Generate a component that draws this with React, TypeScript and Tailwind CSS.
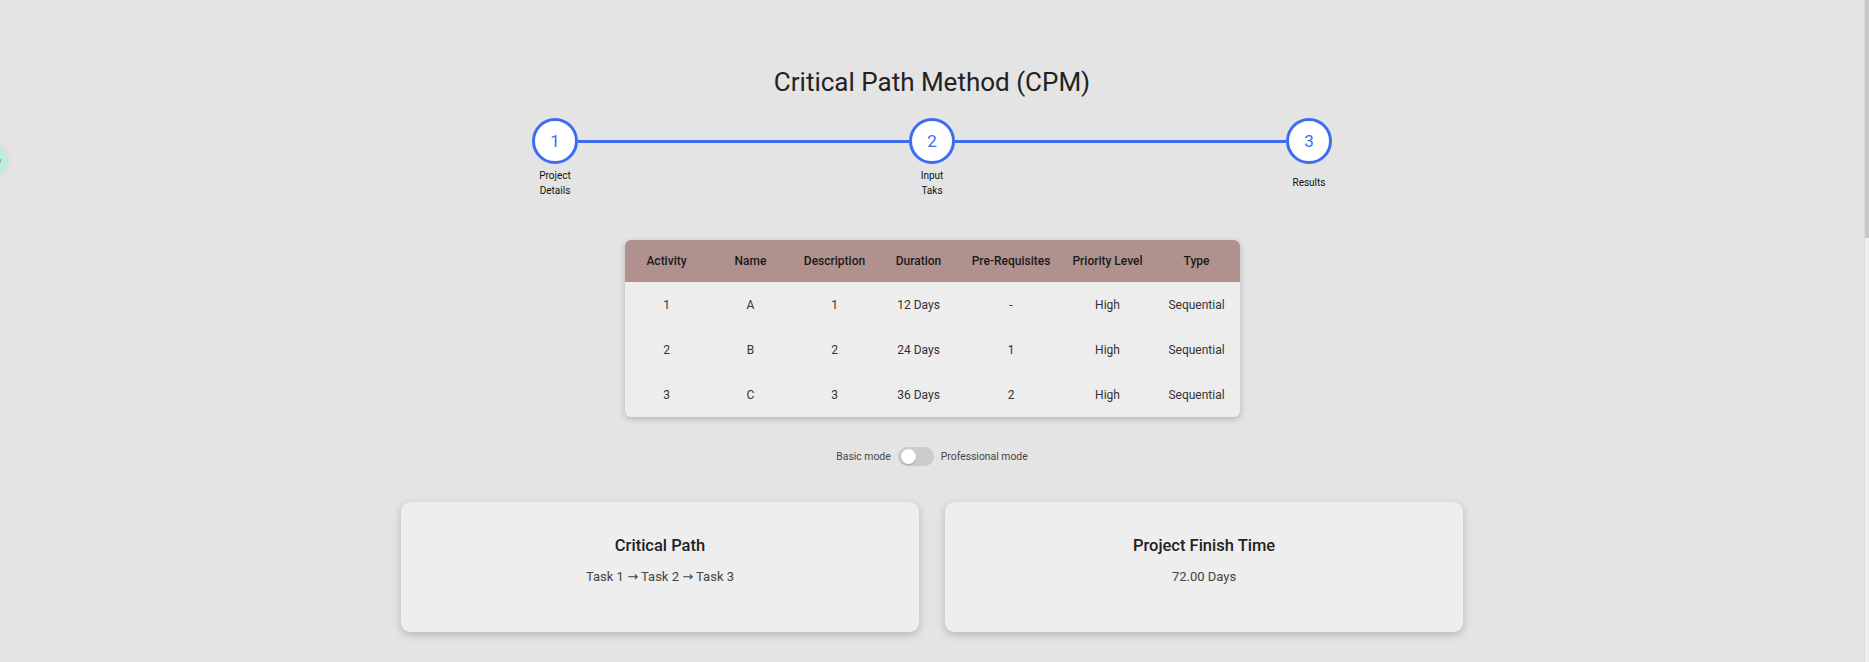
const steps = [
  { n: 1, label: "Project Details" },
  { n: 2, label: "Input Taks" },
  { n: 3, label: "Results" },
];

const columns = [
  { title: "Activity", w: "w-[84px]" },
  { title: "Name", w: "w-[84px]" },
  { title: "Description", w: "w-[84px]" },
  { title: "Duration", w: "w-[84px]" },
  { title: "Pre-Requisites", w: "w-[101px]" },
  { title: "Priority Level", w: "w-[92px]" },
  { title: "Type", w: "w-[86px]" },
];

const rows = [
  ["1", "A", "1", "12 Days", "-", "High", "Sequential"],
  ["2", "B", "2", "24 Days", "1", "High", "Sequential"],
  ["3", "C", "3", "36 Days", "2", "High", "Sequential"],
];

function Step({ n, label }: { n: number; label: string }) {
  return (
    <div className="flex flex-col items-center w-[46px] shrink-0">
      <div className="w-[46px] h-[46px] rounded-full border-[3px] border-[#3b6cf2] bg-white flex items-center justify-center text-[#3b6cf2] text-[17px] leading-none">
        {n}
      </div>
      <div className="mt-[5px] h-[29px] w-[40px] flex items-center justify-center text-center text-[10px] leading-[14.5px] text-[#111]">
        {label}
      </div>
    </div>
  );
}

function Stepper() {
  return (
    <div className="w-[800px] mx-auto mt-[20px] flex items-start">
      {steps.map((s, i) => (
        <div key={s.n} className={i < steps.length - 1 ? "flex items-start flex-1" : "flex items-start"}>
          <Step n={s.n} label={s.label} />
          {i < steps.length - 1 && <div className="flex-1 h-[3px] mt-[22px] bg-[#3b6cf2]" />}
        </div>
      ))}
    </div>
  );
}

function TaskTable() {
  return (
    <div className="w-[615px] mx-auto mt-[42px] rounded-[6px] overflow-hidden bg-[#ededed] shadow-[0_2px_6px_rgba(0,0,0,0.22)]">
      <table className="w-full table-fixed border-collapse text-[12px]">
        <colgroup>
          {columns.map((c) => (
            <col key={c.title} className={c.w} />
          ))}
        </colgroup>
        <thead>
          <tr className="bg-[#b1918e] h-[42px]">
            {columns.map((c) => (
              <th key={c.title} className="font-medium text-[#1a1a1a] text-center px-0 whitespace-nowrap">
                {c.title}
              </th>
            ))}
          </tr>
        </thead>
        <tbody>
          {rows.map((r, i) => (
            <tr key={i} className="h-[45px]">
              {r.map((cell, j) => (
                <td key={j} className="text-center text-[#333] whitespace-nowrap">
                  {cell}
                </td>
              ))}
            </tr>
          ))}
        </tbody>
      </table>
    </div>
  );
}

function ModeToggle() {
  return (
    <div className="mt-[30px] h-[19px] flex items-center justify-center gap-[7px] text-[10.4px] text-[#444]">
      <span>Basic mode</span>
      <div className="w-[36px] h-[19px] rounded-full bg-[#cbcbcb] flex items-center px-[3px]">
        <div className="w-[15px] h-[15px] rounded-full bg-white shadow-[0_1px_2px_rgba(0,0,0,0.2)]" />
      </div>
      <span>Professional mode</span>
    </div>
  );
}

function ResultCard({ title, children }: { title: string; children: React.ReactNode }) {
  return (
    <div className="h-[130px] rounded-[9px] bg-[#eeeeee] shadow-[0_3px_8px_rgba(0,0,0,0.2)] flex flex-col items-center pt-[33px]">
      <div className="text-[16.5px] leading-[22px] font-medium text-[#222]">{title}</div>
      <div className="mt-[11px] text-[13px] leading-[18px] text-[#444]">{children}</div>
    </div>
  );
}

export default function App() {
  return (
    <div className="h-[662px] w-full flex overflow-hidden font-[Roboto,sans-serif] bg-[#e4e4e4]">
      <main className="relative flex-1 pt-[66px]">
        {/* floating helper button, mostly off screen */}
        <div className="absolute left-[-25px] top-[144px] w-[33px] h-[33px] rounded-full bg-[#bfeedb] shadow-[0_0_4px_rgba(230,180,190,0.5)]">
          <div className="absolute right-[7px] top-[15px] w-[3px] h-[4px] bg-[#9aa8a2]" />
        </div>

        <h1 className="text-center text-[26px] leading-[32px] font-normal text-[#222]">
          Critical Path Method (CPM)
        </h1>

        <Stepper />
        <TaskTable />
        <ModeToggle />

        <div className="w-[1062px] mx-auto mt-[36px] grid grid-cols-2 gap-[26px]">
          <ResultCard title="Critical Path">
            Task 1 <span className="font-['DejaVu_Sans']">→</span> Task 2 <span className="font-['DejaVu_Sans']">→</span> Task 3
          </ResultCard>
          <ResultCard title="Project Finish Time">72.00 Days</ResultCard>
        </div>
      </main>

      {/* scrollbar */}
      <div className="w-[5px] flex flex-col bg-[#f0f0f0] border-l border-[#dcdcdc]">
        <div className="h-[238px] bg-[#c8c8c8]" />
      </div>
    </div>
  );
}
